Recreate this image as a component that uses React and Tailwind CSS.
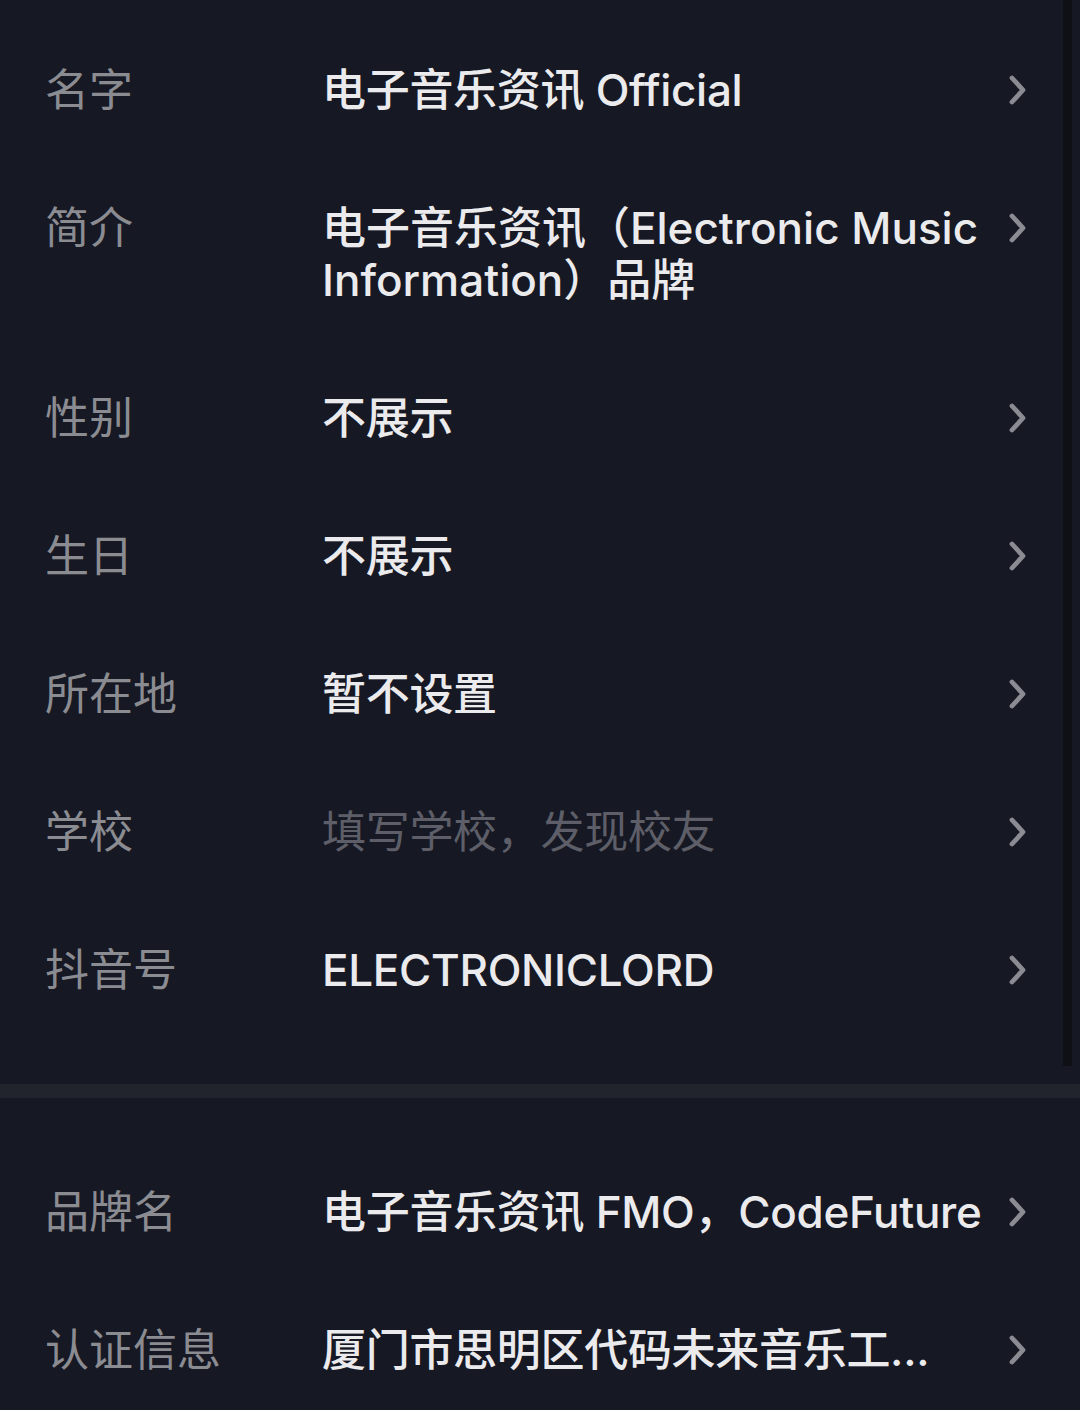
import React from 'react';

const FONT = 'font-["Inter","Noto_Sans_CJK_SC",sans-serif]';

const TOP_ROWS = [
  { label: '名字', value: '电子音乐资讯 Official' },
  { label: '简介', value: '电子音乐资讯（Electronic Music Information）品牌', wrap: true },
  { label: '性别', value: '不展示' },
  { label: '生日', value: '不展示' },
  { label: '所在地', value: '暂不设置' },
  { label: '学校', value: '填写学校，发现校友', placeholder: true },
  { label: '抖音号', value: 'ELECTRONICLORD' },
];

const BOTTOM_ROWS = [
  { label: '品牌名', value: '电子音乐资讯 FMO，CodeFuture' },
  { label: '认证信息', value: '厦门市思明区代码未来音乐工...' },
];

function Chevron() {
  return (
    <div className="h-[52px] w-[24px] flex items-center justify-center shrink-0">
      <svg width="22" height="34" viewBox="0 0 22 34" fill="none">
        <path d="M5 5 L16 17 L5 29" stroke="#8b8c93" strokeWidth="4.8" strokeLinecap="round" strokeLinejoin="round" />
      </svg>
    </div>
  );
}

function Row({ label, value, placeholder, wrap }) {
  return (
    <div className="flex items-start py-[43px] pl-[45px] pr-[50px]">
      <div className="w-[277px] shrink-0 text-[44px] leading-[52px] text-[#8b8c92]">{label}</div>
      <div
        className={`flex-1 min-w-0 pr-[18px] text-[44px] leading-[52px] ${wrap ? '' : 'whitespace-nowrap tracking-[-0.3px]'} ${
          placeholder ? 'text-[#5d5e67] font-normal' : 'text-[#ebebee] font-medium'
        }`}
      >
        {value}
      </div>
      <Chevron />
    </div>
  );
}

export default function App() {
  return (
    <div className={`relative w-[1080px] h-[1410px] overflow-hidden bg-[#161823] ${FONT}`}>
      <div className="absolute right-[8px] top-0 w-[9px] h-[1066px] bg-[#0e1016]" />
      <div className="pt-[21px] pb-[45px]">
        {TOP_ROWS.map((r) => (
          <Row key={r.label} {...r} />
        ))}
      </div>
      <div className="h-[14px] bg-[#21232d]" />
      <div className="pt-[45px]">
        {BOTTOM_ROWS.map((r) => (
          <Row key={r.label} {...r} />
        ))}
      </div>
    </div>
  );
}
